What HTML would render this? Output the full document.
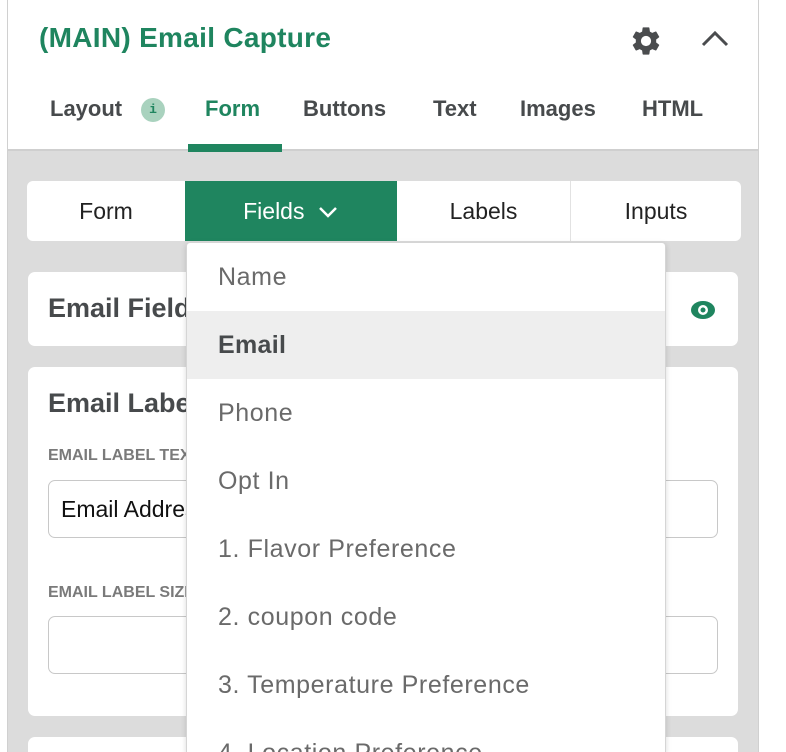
<!DOCTYPE html>
<html style="width:786px;height:752px;overflow:hidden"><head><style>
*{box-sizing:border-box;margin:0;padding:0}
body{width:786px;height:752px;overflow:hidden;background:#fff;font-family:"Liberation Sans",sans-serif;position:relative}
.panel{position:absolute;left:7px;top:-10px;width:752px;height:762px;border:1.5px solid #d0d0d0;border-bottom:none;border-radius:8px 8px 0 0;background:#dcdcdc;overflow:hidden}
.head{position:absolute;left:0;top:0;width:100%;height:160px;background:#fff;border-bottom:2px solid #cfcfcf}
.abs{position:absolute}
.title{left:31px;top:31px;font-size:28px;font-weight:bold;color:#1f855f;letter-spacing:0.3px}
.tab{top:105px;font-size:22px;font-weight:bold;color:#474a4c}
.seg{left:19px;top:190px;width:714px;height:60px;background:#fff;border-radius:6px;overflow:hidden}
.seg div{position:absolute;top:0;height:60px;line-height:60px;text-align:center;font-size:23px;color:#222}
.card{background:#fff;border-radius:7px;left:20px;width:710px}
.h{font-size:27px;font-weight:bold;color:#474a4c}
.lbl{font-size:16px;font-weight:bold;color:#7a7a7a}
.inp{left:20px;width:670px;height:58px;border:1.5px solid #c8c8c8;border-radius:7px}
.dd{position:absolute;left:186px;top:242px;width:480px;height:510px;background:#fff;border:1px solid #d5d5d5;border-bottom:none;border-radius:4px 4px 0 0;box-shadow:0 2px 6px rgba(0,0,0,.15);overflow:hidden}
.dd div{height:68px;line-height:68px;padding-left:31px;font-size:25px;letter-spacing:0.6px;color:#6a6a6a;white-space:nowrap}
</style></head><body>
<div class="panel">
<div class="head">
<div class="abs title">(MAIN) Email Capture</div>
<svg class="abs" style="left:621px;top:33px" width="34" height="34" viewBox="0 0 24 24"><path fill="#4a4c4e" d="M19.14 12.94c.04-.3.06-.61.06-.94s-.02-.64-.07-.94l2.03-1.58a.49.49 0 0 0 .12-.61l-1.92-3.32a.49.49 0 0 0-.59-.22l-2.39.96c-.5-.38-1.03-.7-1.62-.94l-.36-2.54a.48.48 0 0 0-.48-.41h-3.84a.48.48 0 0 0-.47.41l-.36 2.54c-.59.24-1.13.57-1.62.94l-2.39-.96a.48.48 0 0 0-.59.22L2.74 8.87a.47.47 0 0 0 .12.61l2.03 1.58c-.05.3-.09.63-.09.94s.02.64.07.94l-2.03 1.58a.49.49 0 0 0-.12.61l1.92 3.32c.12.22.37.29.59.22l2.39-.96c.5.38 1.03.7 1.62.94l.36 2.54c.05.24.24.41.48.41h3.84c.24 0 .44-.17.47-.41l.36-2.54c.59-.24 1.13-.56 1.62-.94l2.39.96c.22.08.47 0 .59-.22l1.92-3.32c.12-.22.07-.47-.12-.61l-2.01-1.58zM12 15.6A3.6 3.6 0 1 1 12 8.4a3.6 3.6 0 0 1 0 7.2z"/></svg>
<svg class="abs" style="left:692px;top:36px" width="30" height="24" viewBox="0 0 30 24"><path d="M3 18L15 6L27 18" fill="none" stroke="#4a4c4e" stroke-width="3"/></svg>
<div class="abs tab" style="left:42px">Layout</div>
<div class="abs" style="left:133px;top:107px;width:24px;height:24px;border-radius:50%;background:#a9d2be;color:#1f855f;font-size:13px;font-weight:bold;text-align:center;line-height:24px;font-family:'Liberation Mono',monospace">i</div>
<div class="abs tab" style="left:197px;color:#1f855f">Form</div>
<div class="abs tab" style="left:295px">Buttons</div>
<div class="abs tab" style="left:425px">Text</div>
<div class="abs tab" style="left:512px">Images</div>
<div class="abs tab" style="left:634px">HTML</div>
<div class="abs" style="left:180px;top:153px;width:94px;height:8px;background:#1f855f"></div>
</div>
<div class="abs seg">
<div style="left:0;width:158px">Form</div>
<div style="left:158px;width:212px;background:#1f855f;color:#fff">Fields <svg width="22" height="14" viewBox="0 0 22 14" style="margin-left:6px"><path d="M3 3L11 11L19 3" fill="none" stroke="#fff" stroke-width="2.5"/></svg></div>
<div style="left:370px;width:173px">Labels</div>
<div style="left:543px;width:171px;border-left:1.5px solid #e2e2e2">Inputs</div>
</div>
<div class="abs card" style="top:281px;height:74px"><div class="abs h" style="left:20px;top:21px">Email Fields</div>
<svg class="abs" style="left:661px;top:27px" width="28" height="22" viewBox="0 0 28 22"><ellipse cx="14" cy="11" rx="12" ry="9" fill="#1f855f"/><circle cx="14" cy="11" r="5" fill="#fff"/><circle cx="14" cy="11" r="2.5" fill="#1f855f"/></svg></div>
<div class="abs card" style="top:376px;height:349px">
<div class="abs h" style="left:20px;top:21px">Email Label</div>
<div class="abs lbl" style="left:20px;top:80px">EMAIL LABEL TEXT</div>
<div class="abs inp" style="top:113px"><span style="position:absolute;left:12px;top:15px;font-size:23px;color:#111">Email Address</span></div>
<div class="abs lbl" style="left:20px;top:217px">EMAIL LABEL SIZE</div>
<div class="abs inp" style="top:249px"></div>
</div>
<div class="abs card" style="top:746px;height:16px;border-radius:7px 7px 0 0"></div>
</div>
<div class="dd">
<div>Name</div>
<div style="background:#eeeeee;font-weight:bold;color:#474a4c;letter-spacing:0.3px">Email</div>
<div>Phone</div>
<div>Opt In</div>
<div>1. Flavor Preference</div>
<div>2. coupon code</div>
<div>3. Temperature Preference</div>
<div>4. Location Preference</div>
</div>
</body></html>
